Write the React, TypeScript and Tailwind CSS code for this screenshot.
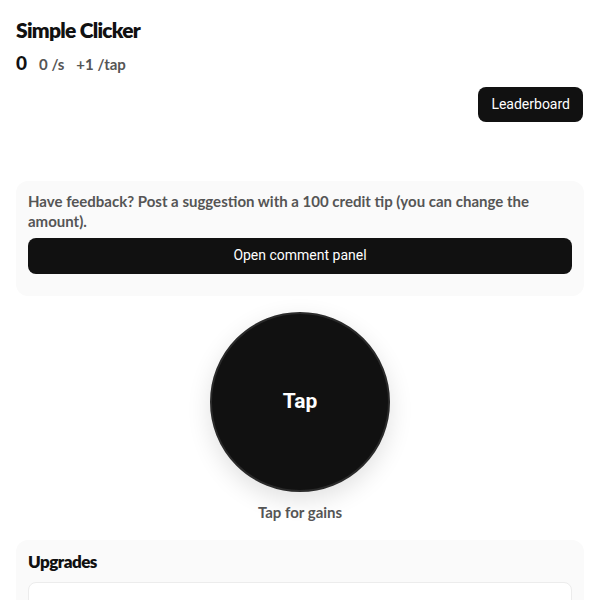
import { useState } from "react";

const bodyFont = { fontFamily: "Lato, 'Noto Sans', sans-serif" };

export default function App() {
  const [count, setCount] = useState(0);

  return (
    <div className="min-h-screen bg-white px-4 pt-4 text-[#111]" style={bodyFont}>
      <h1 className="text-[21px] font-extrabold leading-7 tracking-[-0.035em]">Simple Clicker</h1>
      <div className="mt-[9px] flex items-baseline gap-3">
        <span className="text-[19px] font-black leading-5">{count}</span>
        <span className="text-[15px] font-bold text-[#555]">0 /s</span>
        <span className="text-[15px] font-bold text-[#555]">+1 /tap</span>
      </div>

      <div className="mt-[11px] flex justify-end pr-[1px]">
        <button className="h-[35px] rounded-lg bg-[#111] px-[13px] text-[14px] text-white" style={{ fontFamily: "Roboto, sans-serif" }}>
          Leaderboard
        </button>
      </div>

      <div className="mt-[59px] rounded-xl bg-[#fafafa] px-3 pt-[10px] pb-[22px]">
        <p className="text-[15px] font-bold leading-5 text-[#555]">
          Have feedback? Post a suggestion with a 100 credit tip (you can change the amount).
        </p>
        <button className="mt-[7px] h-[36px] w-full rounded-lg bg-[#111] text-[14px] text-white" style={{ fontFamily: "Roboto, sans-serif" }}>
          Open comment panel
        </button>
      </div>

      <div className="mt-4 flex flex-col items-center">
        <button
          onClick={() => setCount((c) => c + 1)}
          className="flex h-[180px] w-[180px] items-center justify-center rounded-full border-2 border-[#2a2a2a] bg-[#111] text-[21px] font-bold text-white shadow-[0_8px_24px_rgba(0,0,0,0.12)]"
          style={{ fontFamily: "Roboto, sans-serif" }}
        >
          Tap
        </button>
        <p className="mt-[10px] text-[15px] font-bold leading-5 text-[#555]">Tap for gains</p>
      </div>

      <div className="mt-[18px] rounded-xl bg-[#fafafa] px-3 pt-[11px] pb-4">
        <h2 className="text-[17px] font-extrabold leading-[22px] tracking-[-0.03em]">Upgrades</h2>
        <div className="mt-[9px] h-16 rounded-lg border border-[#ececec] bg-white" />
      </div>
    </div>
  );
}
